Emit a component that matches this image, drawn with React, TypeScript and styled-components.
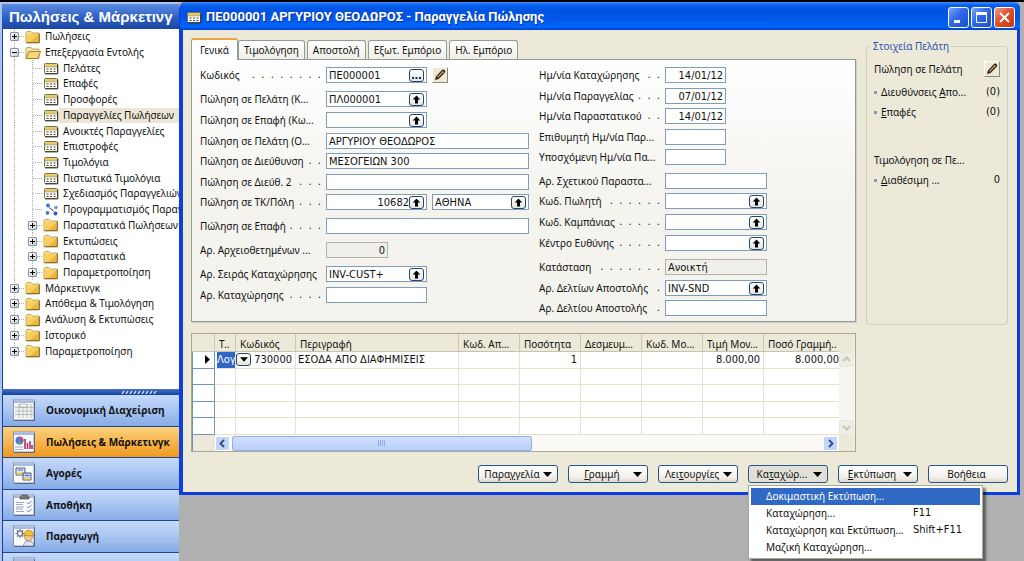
import React, { useId } from "react";
import styled, { createGlobalStyle, css } from "styled-components";

const valueFont = `11px/16px "DejaVu Sans Condensed", "Liberation Sans", sans-serif`;

const GlobalStyle = createGlobalStyle`
  *, *::before, *::after { box-sizing: border-box; }
  html, body { margin: 0; background: #b0b0b0; }
  body, button { font: 10px/16px "Noto Sans", "Open Sans", sans-serif; color: #111; }
  button { padding: 0; cursor: default; }
`;

const Desktop = styled.div`
  display: flex;
  align-items: flex-start;
  height: 100vh;
  overflow: hidden;
  border-top: 2px solid #000;
`;

/* ---------- navigation pane ---------- */

const Pane = styled.nav`
  flex: none;
  width: 179px;
  overflow: hidden;
  border-left: 2px solid #a9c5f5;
  border-top: 2px solid #a9c5f5;
  background: #fff;
  box-shadow: inset 1px 0 #1b3f96;
`;

const PaneTitle = styled.h1`
  margin: 0;
  padding-left: 7px;
  height: 25px;
  overflow: hidden;
  font: bold 15px/25px "Liberation Sans", sans-serif;
  white-space: nowrap;
  color: #fff;
  background: linear-gradient(#5b8be0, #2a5cc0 60%, #1c46a0);
`;

const Tree = styled.ul`
  display: grid;
  grid-auto-rows: 1fr;
  height: 330px;
  margin: 0 0 30px;
  padding: 0;
  list-style: none;
`;

const TreeItem = styled.li<{ $level: number }>`
  display: flex;
  align-items: center;
  padding-left: ${(p) => (p.$level ? 26 : 8)}px;
  background: ${(p) =>
    p.$level
      ? "repeating-linear-gradient(#aaa 0 1px, transparent 1px 2px) 12px 0 / 1px 100% no-repeat, repeating-linear-gradient(#aaa 0 1px, transparent 1px 2px) 30px 0 / 1px 100% no-repeat"
      : "repeating-linear-gradient(#aaa 0 1px, transparent 1px 2px) 12px 0 / 1px 100% no-repeat"};
`;

const Toggle = styled.button`
  flex: none;
  width: 9px;
  height: 9px;
  border: 1px solid #7b94b8;
  border-radius: 1px;
  background: linear-gradient(135deg, #fff, #d0ccc0);
  display: grid;
  place-items: center;
  svg { display: block; }
`;

const Twig = styled.span<{ $wide?: boolean }>`
  flex: none;
  width: ${(p) => (p.$wide ? 9 : 5)}px;
  margin-left: ${(p) => (p.$wide ? 5 : 0)}px;
  margin-right: 1px;
  border-top: 1px dotted #aaa;
`;

const TreeLink = styled.a<{ $active?: boolean }>`
  padding-left: 4px;
  height: 15px;
  line-height: 15px;
  white-space: nowrap;
  color: #111;
  text-decoration: none;
  background: ${(p) => (p.$active ? "#ece7d5" : "transparent")};
  flex: 1;
`;

const Splitter = styled.div`
  display: flex;
  justify-content: center;
  align-items: center;
  height: 6px;
  padding-left: 96px;
  background: linear-gradient(#4474c8, #17409a);
`;

const Areas = styled.div`
  display: grid;
  grid-auto-rows: 1fr;
  height: 189px;
  padding-left: 1px;
`;

const AreaButton = styled.button<{ $active?: boolean }>`
  display: flex;
  align-items: center;
  gap: 11px;
  overflow: hidden;
  padding-left: 10px;
  border: 0;
  border-bottom: 1px solid #1d459c;
  background: ${(p) =>
    p.$active ? "linear-gradient(#fbd27c, #f7b64c 50%, #ef9a1f)" : "linear-gradient(#c6dafa, #a8c5f2 50%, #86abe6)"};
  font: bold 10px/16px "Open Sans", sans-serif;
  white-space: nowrap;
  svg { flex: none; }
`;

/* ---------- window ---------- */

const Window = styled.main`
  flex: 1;
  min-width: 0;
  margin-right: 4px;
  border: solid #0c3fdc;
  border-width: 0 3px 3px 4px;
  border-radius: 7px 7px 0 0;
  background: #ece9d8;
`;

const TitleBar = styled.header`
  display: flex;
  align-items: center;
  gap: 2px;
  height: 28px;
  margin: 0 -3px;
  padding: 2px 5px 0 6px;
  border-radius: 6px 6px 0 0;
  background: linear-gradient(#3d8bff, #0660ee 12%, #0053e1 30%, #0057e8 60%, #0066ff 88%, #0040c4);
`;

const Title = styled.h2`
  flex: 1;
  margin: 0 0 0 2px;
  font: bold 13px/20px Roboto, sans-serif;
  color: #fff;
  text-shadow: 1px 1px #0a2f95;
  white-space: nowrap;
`;

const CaptionButton = styled.button<{ $close?: boolean }>`
  width: 21px;
  height: 21px;
  display: grid;
  place-items: center;
  border: 1px solid #fff;
  border-radius: 3px;
  background: ${(p) =>
    p.$close ? "linear-gradient(135deg, #f0a088, #e0502c 45%, #c43a14)" : "linear-gradient(135deg, #7ba6f7, #2f67e6 45%, #1c50cf)"};
`;

const Body = styled.div`
  padding: 8px 9px 9px 8px;
`;

const Upper = styled.div`
  display: flex;
  gap: 10px;
`;

const Left = styled.div`
  flex: 1;
  min-width: 0;
`;

const Tabs = styled.div`
  display: flex;
  align-items: flex-end;
  gap: 2px;
  height: 21px;
`;

const Tab = styled.button<{ $active?: boolean }>`
  height: 19px;
  padding: 0 5px;
  border: 1px solid #919b9c;
  border-bottom: 0;
  border-radius: 3px 3px 0 0;
  background: linear-gradient(#fff, #efeee6);
  white-space: nowrap;
  ${(p) =>
    p.$active &&
    css`
      height: 22px;
      margin: 0 -2px -1px 0;
      padding: 0 8px;
      border-top: 2px solid #eda63a;
      background: #fff;
      position: relative;
    `}
`;

const Panel = styled.section`
  display: flex;
  gap: 10px;
  padding: 7px 8px 16px;
  height: 263px;
  border: 1px solid #919b9c;
  box-shadow: 1px 1px #d0cec0;
  background: linear-gradient(#fff, #f4f3ee 55%);
`;

const Column = styled.div<{ $width: number }>`
  width: ${(p) => p.$width}px;
`;

const Row = styled.div<{ $before: number }>`
  display: flex;
  height: 16px;
  margin-top: ${(p) => p.$before}px;
`;

const Label = styled.label`
  flex: none;
  display: flex;
  width: 126px;
  padding-right: 5px;
  line-height: 17px;
  white-space: pre;
`;

const Leader = styled.span`
  flex: 1;
  font: ${valueFont};
  text-align: right;
`;

const Box = styled.span<{ $width?: number; $disabled?: boolean }>`
  display: flex;
  align-items: center;
  ${(p) => (p.$width ? `width: ${p.$width}px;` : "flex: 1;")}
  padding-right: 2px;
  border: 1px solid ${(p) => (p.$disabled ? "#b5b3a6" : "#7f9db9")};
  background: ${(p) => (p.$disabled ? "#f0efe9" : "#fff")};
  & + & { margin-left: 5px; }
`;

const Input = styled.input<{ $right?: boolean }>`
  flex: 1;
  min-width: 0;
  width: 0;
  height: 14px;
  padding: 1px 0 0 2px;
  border: 0;
  outline: 0;
  background: transparent;
  font: ${valueFont};
  color: #111;
  text-align: ${(p) => (p.$right ? "right" : "left")};
`;

const Lookup = styled.button`
  flex: none;
  width: 15px;
  height: 13px;
  display: grid;
  place-items: center;
  border: 1px solid #26466f;
  border-radius: 3px;
  background: linear-gradient(#fff, #e6e6e0);
`;

const EditButton = styled.button`
  flex: none;
  width: 16px;
  height: 16px;
  display: grid;
  place-items: center;
  border: 1px solid;
  border-color: #fff #8c8a7c #8c8a7c #fff;
  background: #ece9d8;
`;

const EditSlot = styled.span`
  margin-left: 5px;
`;

const Facts = styled.fieldset`
  flex: none;
  width: 142px;
  min-width: 0;
  height: 287px;
  margin: 0;
  margin-bottom: -3px;
  padding: 5px 7px;
  border: 1px solid #d0d0bf;
  border-radius: 4px;
  legend {
    margin-left: -3px;
    padding: 0 2px;
    color: #2c51b0;
  }
`;

const Fact = styled.div<{ $before?: number; $link?: boolean }>`
  display: flex;
  align-items: center;
  height: 20px;
  margin-top: ${(p) => p.$before ?? 0}px;
  white-space: nowrap;
  a { flex: 1; color: inherit; text-decoration: none; }
  & > span:first-child { flex: 1; }
  ${(p) =>
    p.$link &&
    css`
      &::before { content: ""; width: 3px; height: 3px; margin-right: 4px; background: #7f9db9; }
    `}
`;

const FactValue = styled.span`
  font: ${valueFont};
`;

/* ---------- lines ---------- */

const Lines = styled.div`
  display: grid;
  grid-template-columns: 1fr 16px;
  width: calc(100% - 152px);
  height: 119px;
  margin-top: 11px;
  border: 1px solid #a9a798;
  background: #ece9d8;
`;

const Table = styled.table`
  width: 100%;
  height: 101px;
  table-layout: fixed;
  border-collapse: separate;
  border-spacing: 0;
  background: #fff;
  th, td {
    height: 16px;
    padding: 0 3px 0 2px;
    overflow: hidden;
    white-space: nowrap;
    text-align: left;
    font-weight: normal;
    line-height: 15px;
    border-right: 1px solid #e4e2cd;
    border-bottom: 1px solid #e4e2cd;
  }
  td { font: ${valueFont}; line-height: 15px; }
  thead th {
    height: 18px;
    padding: 3px 0 0 4px;
    line-height: 14px;
    border-bottom-color: #c6c3b0;
    border-right-color: #c9c6b5;
    background: #ece9d8;
  }
  tbody th {
    border-right: 1px solid #6f93bb;
    border-bottom: 1px solid #6f93bb;
    border-left: 1px solid #6f93bb;
    text-align: right;
    padding-right: 4px;
  }
  th svg { display: block; margin-left: auto; }
  th:last-child, td:last-child { border-right: 0; padding-right: 0; }
`;

const Cell = styled.td<{ $right?: boolean; $selected?: boolean }>`
  && {
    text-align: ${(p) => (p.$right ? "right" : "left")};
    ${(p) => p.$selected && "background: #2f65c4; color: #fff; padding: 0; border-left: 2px solid #fff;"}
  }
`;

const CodeValue = styled.span`
  display: flex;
  align-items: center;
  justify-content: space-between;
  margin-left: -2px;
`;

const VScroll = styled.div`
  display: flex;
  flex-direction: column;
  justify-content: space-between;
  margin: 18px 0 16px;
  background: #f6f5ef;
`;

const HScroll = styled.div`
  display: flex;
  align-items: center;
  height: 16px;
  padding: 0 1px 0 22px;
  gap: 2px;
  border-left: 1px solid #6f93bb;
  background: linear-gradient(90deg, #ece9d8 22px, #fbfaf6 22px);
`;

const ScrollArrow = styled.button<{ $off?: boolean }>`
  flex: none;
  width: 15px;
  height: 15px;
  display: grid;
  place-items: center;
  border: 1px solid ${(p) => (p.$off ? "#e8e6da" : "#fff")};
  border-radius: 2px;
  background: ${(p) => (p.$off ? "#f0eee3" : "#c3d5fd")};
`;

const Track = styled.div`
  flex: 1;
  height: 15px;
`;

const Thumb = styled.div`
  display: grid;
  place-items: center;
  width: 51%;
  height: 15px;
  border: 1px solid #98b0e8;
  border-radius: 2px;
  background: linear-gradient(#d0dffe, #b9cffb);
`;

/* ---------- actions ---------- */

const Actions = styled.footer`
  display: flex;
  justify-content: flex-end;
  gap: 10px;
  margin-top: 13px;
`;

const MenuAnchor = styled.div`
  position: relative;
`;

const Action = styled.button<{ $open?: boolean; $center?: boolean }>`
  display: flex;
  align-items: center;
  justify-content: ${(p) => (p.$center ? "center" : "space-between")};
  width: 80px;
  height: 18px;
  padding: 0 5px 0 2px;
  border: 1px solid #26568c;
  border-radius: 3px;
  background: ${(p) => (p.$open ? "#e2e0d6" : "linear-gradient(#fff, #f1f0ea 70%, #dcd9cc)")};
  white-space: nowrap;
  span { flex: 1; text-align: center; }
`;

const Menu = styled.ul`
  position: absolute;
  top: 20px;
  left: 0;
  width: 235px;
  margin: 0;
  padding: 2px;
  border: 1px solid #aca899;
  background: #fff;
  box-shadow: 3px 3px 2px rgba(0, 0, 0, 0.45);
  list-style: none;
`;

const MenuItem = styled.button<{ $active?: boolean }>`
  display: grid;
  grid-template-columns: 147px 1fr;
  width: 100%;
  height: 17px;
  padding-left: 15px;
  border: 0;
  text-align: left;
  white-space: nowrap;
  background: ${(p) => (p.$active ? "#316ac5" : "transparent")};
  color: ${(p) => (p.$active ? "#fff" : "#111")};
`;

const Shortcut = styled.span`
  font: ${valueFont};
`;

/* ---------- drawings ---------- */

const UpArrow = () => (
  <svg width="9" height="9" viewBox="0 0 9 9"><path d="M4.5 0.5 8.3 4.5H6V8.5H3V4.5H0.7Z" fill="#000" /></svg>
);
const Dots = () => (
  <svg width="9" height="9" viewBox="0 0 9 9"><path d="M0 6h2v2H0zM3.500 6h2v2h-2zM7 6h2v2H7z" fill="#14325c" /></svg>
);
const DownArrow = ({ size = 9 }: { size?: number }) => (
  <svg width={size} height="5" viewBox="0 0 9 5"><path d="M0 0h9L4.500 5z" fill="#000" /></svg>
);
const Pencil = () => (
  <svg width="12" height="12" viewBox="0 0 12 12">
    <path d="M1 11 2 7.500 7.500 1.500Q9-.3 10.600 1.200 12 2.600 10.500 4L4.500 10Z" fill="#2b1a10" />
    <path d="M3.500 8.500 8.700 3" stroke="#d09a50" strokeWidth="1.400" />
    <path d="M8 1.800l2 2" stroke="#fff" strokeWidth=".7" />
  </svg>
);
const Chevron = ({ turn, color }: { turn: number; color: string }) => (
  <svg width="9" height="9" viewBox="0 0 9 9">
    <path d="M6 1 2.500 4.500 6 8" fill="none" stroke={color} strokeWidth="2" transform={`rotate(${turn} 4.500 4.500)`} />
  </svg>
);
const Sign = ({ open }: { open?: boolean }) => (
  <svg width="7" height="7" viewBox="0 0 7 7"><path d={open ? "M1 3h5v1H1z" : "M1 3h5v1H1zM3 1h1v5H3z"} fill="#000" /></svg>
);
const Folder = ({ open }: { open?: boolean }) => (
  <svg width="16" height="14" viewBox="0 0 16 14">
    <path d="M1 12.500V2.500L2 1.500H6L7.500 3H14V12.500Z" fill={open ? "#f7e3a0" : "#fbe08a"} stroke="#b8923a" strokeWidth=".8" />
    {open ? (
      <path d="M1 12.500 4 5.500H15.600L12.800 12.500Z" fill="#fbd679" stroke="#9a701a" strokeWidth=".8" />
    ) : (
      <>
        <path d="M1.500 4H13.500V12H1.500Z" fill="#f8d060" />
        <path d="M5 12 13.500 4.500V12Z" fill="#eeb43c" />
        <path d="M14.300 3.500V12.800H1.500" fill="none" stroke="#6e5112" strokeWidth=".9" />
      </>
    )}
  </svg>
);
const Sheet = () => (
  <svg width="16" height="13" viewBox="0 0 16 13">
    <rect x="1.500" y="1.500" width="13" height="10" rx="1" fill="#fffdf0" stroke="#77705a" />
    <path d="M2 2H14V4.500H2Z" fill="#eccb5e" />
    <path d="M2 4.800H14" stroke="#77705a" strokeWidth=".6" />
    <path d="M3.500 7h2M7 7h2M10.500 7h2M3.500 9.500h2M7 9.500h2M10.500 9.500h2" stroke="#444" strokeWidth="1.200" />
    <path d="M14.800 2.500V11.900H2" stroke="#222" strokeWidth=".9" fill="none" />
  </svg>
);
const Nodes = () => (
  <svg width="16" height="13" viewBox="0 0 16 13">
    <path d="M6 4.500 11 8.500" stroke="#444" fill="none" />
    <circle cx="5" cy="2.500" r="1.900" fill="#3f6fe0" /><circle cx="4.500" cy="9.800" r="1.900" fill="#3f6fe0" />
    <circle cx="13" cy="4.500" r="1.800" fill="#6b95ef" /><circle cx="12.500" cy="10.500" r="1.900" fill="#2a56c6" />
  </svg>
);
const Grip = () => (
  <svg width="36" height="4" viewBox="0 0 36 4">
    <path d="M1 4l2-3M5 4l2-3M9 4l2-3M13 4l2-3M17 4l2-3M21 4l2-3M25 4l2-3M29 4l2-3M33 4l2-3" stroke="#e6eefc" strokeWidth="1.300" />
  </svg>
);

const areaArt: Record<string, React.ReactNode> = {
  ledger: (
    <>
      <path d="M2 5H20V19H2Z" fill="#f4f4e6" />
      <path d="M2 8.500H20M2 12H20M2 15.500H20M6 5V19M10 5V19M14 5V19M18 5V19" stroke="#a9b3c0" strokeWidth=".8" />
      <path d="M7 5h7v3H7z" fill="#fff" stroke="#8f98a8" strokeWidth=".6" />
    </>
  ),
  sales: (
    <>
      <circle cx="6.500" cy="9.500" r="4" fill="#4a7ae0" />
      <path d="M6.500 9.500V5.500A4 4 0 0 1 10.300 10.500Z" fill="#d14b7c" /><path d="M6.500 9.500 9 13A4 4 0 0 1 4 12.500Z" fill="#50b06a" />
      <path d="M12 18V8M14.500 18V12M17 18V10M19 18V14" stroke="#b02e5e" strokeWidth="1.600" />
      <path d="M2 16h8M2 18.500h8" stroke="#8f98b8" strokeWidth=".8" />
    </>
  ),
  buying: (
    <>
      <path d="M3 6h9v7H3z" fill="#dce9fc" stroke="#334" strokeWidth=".8" /><path d="M3.500 10.500h8v2h-8z" fill="#f0d23c" />
      <path d="M10 11h8v7h-8z" fill="#bcd4fb" stroke="#334" strokeWidth=".8" /><path d="M10.500 16h7v1.600h-7z" fill="#f0d23c" />
      <path d="M5 8h5M12 13.500h4" stroke="#3b69cc" />
    </>
  ),
  stock: (
    <>
      <path d="M7 3 9 1h5l2 2v2H7z" fill="#77757a" stroke="#444" strokeWidth=".6" />
      <path d="M3 8.500h8M3 10.500h7M3 13h8M3 15h7M3 17.500h8" stroke="#8a90b0" strokeWidth=".8" />
      <path d="M14 8.500l1.500 1.500 3-3M14 12.500l1.500 1.500 3-3M14 16.500l1.500 1.500 3-3" fill="none" stroke="#3f6bc0" strokeWidth=".9" />
    </>
  ),
  production: (
    <>
      <circle cx="7" cy="8.500" r="2.600" fill="none" stroke="#6b7488" strokeWidth="1.300" />
      <path d="M7 4v1.500M7 11.500v1.500M2.500 8.500h1.500M10 8.500h1.500M3.900 5.400l1 1M9.100 10.600l1 1M3.900 11.600l1-1M9.100 6.400l1-1" stroke="#6b7488" strokeWidth="1.200" />
      <circle cx="15.500" cy="12" r="4" fill="#f3c79c" stroke="#8a5c30" strokeWidth=".5" />
      <path d="M10.800 10.500Q11.500 5 16 5.200 20.500 5.500 20.500 11Z" fill="#f2c12e" stroke="#8f6c10" strokeWidth=".6" />
      <path d="M10.500 21Q11 16 15.500 16T21 21Z" fill="#dfe6f4" stroke="#5e6f90" strokeWidth=".7" />
    </>
  ),
};

const AreaIcon = ({ kind }: { kind: string }) => (
  <svg width="22" height="22" viewBox="0 0 22 22">
    <rect x=".5" y="1" width="20.500" height="20" fill="#fbfbfd" stroke="#8796b4" />
    <rect x="1" y="1.500" width="19.500" height="2.500" fill="#a9bbdf" />
    {areaArt[kind] ?? areaArt.ledger}
    <path d="M21.500 2V21.500H1" stroke="#5a6a8c" fill="none" />
  </svg>
);

/* ---------- data ---------- */

type Node = { text: string; level: 0 | 1; kind: "folder" | "open" | "sheet" | "nodes"; active?: boolean };
const tree: Node[] = [
  { text: "Πωλήσεις", level: 0, kind: "folder" },
  { text: "Επεξεργασία Εντολής", level: 0, kind: "open" },
  { text: "Πελάτες", level: 1, kind: "sheet" },
  { text: "Επαφές", level: 1, kind: "sheet" },
  { text: "Προσφορές", level: 1, kind: "sheet" },
  { text: "Παραγγελίες Πωλήσεων", level: 1, kind: "sheet", active: true },
  { text: "Ανοικτές Παραγγελίες", level: 1, kind: "sheet" },
  { text: "Επιστροφές", level: 1, kind: "sheet" },
  { text: "Τιμολόγια", level: 1, kind: "sheet" },
  { text: "Πιστωτικά Τιμολόγια", level: 1, kind: "sheet" },
  { text: "Σχεδιασμός Παραγγελιών", level: 1, kind: "sheet" },
  { text: "Προγραμματισμός Παραγ", level: 1, kind: "nodes" },
  { text: "Παραστατικά Πωλήσεων", level: 1, kind: "folder" },
  { text: "Εκτυπώσεις", level: 1, kind: "folder" },
  { text: "Παραστατικά", level: 1, kind: "folder" },
  { text: "Παραμετροποίηση", level: 1, kind: "folder" },
  { text: "Μάρκετινγκ", level: 0, kind: "folder" },
  { text: "Απόθεμα & Τιμολόγηση", level: 0, kind: "folder" },
  { text: "Ανάλυση & Εκτυπώσεις", level: 0, kind: "folder" },
  { text: "Ιστορικό", level: 0, kind: "folder" },
  { text: "Παραμετροποίηση", level: 0, kind: "folder" },
];

const areas = [
  { text: "Οικονομική Διαχείριση", kind: "ledger" },
  { text: "Πωλήσεις & Μάρκετινγκ", kind: "sales", active: true },
  { text: "Αγορές", kind: "buying" },
  { text: "Αποθήκη", kind: "stock" },
  { text: "Παραγωγή", kind: "production" },
  { text: "", kind: "jobs" },
];

type Part = { value?: string; width?: number; right?: boolean; lookup?: "up" | "dots"; disabled?: boolean };
type FieldData = { label: string; dots?: number; before: number; parts: Part[]; edit?: boolean };

const leftFields: FieldData[] = [
  { label: "Κωδικός", dots: 8, before: 0, parts: [{ value: "ΠΕ000001", width: 101, lookup: "dots" }], edit: true },
  { label: "Πώληση σε Πελάτη (Κ...", before: 8, parts: [{ value: "ΠΛ000001", width: 101, lookup: "up" }] },
  { label: "Πώληση σε Επαφή (Κω...", before: 5, parts: [{ width: 101, lookup: "up" }] },
  { label: "Πώληση σε Πελάτη (Ο...", before: 5, parts: [{ value: "ΑΡΓΥΡΙΟΥ ΘΕΟΔΩΡΟΣ" }] },
  { label: "Πώληση σε Διεύθυνση", dots: 2, before: 4, parts: [{ value: "ΜΕΣΟΓΕΙΩΝ 300" }] },
  { label: "Πώληση σε Διεύθ. 2", dots: 3, before: 5, parts: [{}] },
  {
    label: "Πώληση σε ΤΚ/Πόλη", dots: 3, before: 4,
    parts: [{ value: "10682", width: 101, right: true, lookup: "up" }, { value: "ΑΘΗΝΑ", lookup: "up" }],
  },
  { label: "Πώληση σε Επαφή", dots: 4, before: 8, parts: [{}] },
  { label: "Αρ. Αρχειοθετημένων ...", before: 8, parts: [{ value: "0", width: 62, right: true, disabled: true }] },
  { label: "Αρ. Σειράς Καταχώρησης", before: 8, parts: [{ value: "INV-CUST+", width: 101, lookup: "up" }] },
  { label: "Αρ. Καταχώρησης", dots: 4, before: 5, parts: [{ width: 101 }] },
];

const rightFields: FieldData[] = [
  { label: "Ημ/νία Καταχώρησης", dots: 2, before: 0, parts: [{ value: "14/01/12", width: 61, right: true }] },
  { label: "Ημ/νία Παραγγελίας", dots: 3, before: 5, parts: [{ value: "07/01/12", width: 61, right: true }] },
  { label: "Ημ/νία Παραστατικού", dots: 2, before: 4, parts: [{ value: "14/01/12", width: 61, right: true }] },
  { label: "Επιθυμητή Ημ/νία Παρ...", before: 5, parts: [{ width: 61 }] },
  { label: "Υποσχόμενη Ημ/νία Πα...", before: 4, parts: [{ width: 61 }] },
  { label: "Αρ. Σχετικού Παραστα...", before: 8, parts: [{}] },
  { label: "Κωδ. Πωλητή", dots: 6, before: 4, parts: [{ lookup: "up" }] },
  { label: "Κωδ. Καμπάνιας", dots: 5, before: 5, parts: [{ lookup: "up" }] },
  { label: "Κέντρο Ευθύνης", dots: 5, before: 5, parts: [{ lookup: "up" }] },
  { label: "Κατάσταση", dots: 7, before: 8, parts: [{ value: "Ανοικτή", disabled: true }] },
  { label: "Αρ. Δελτίων Αποστολής", dots: 1, before: 5, parts: [{ value: "INV-SND", lookup: "up" }] },
  { label: "Αρ. Δελτίου Αποστολής", dots: 1, before: 4, parts: [{}] },
];

const columns = [
  { title: "", width: 23 }, { title: "Τ..", width: 21 }, { title: "Κωδικός", width: 60 },
  { title: "Περιγραφή", width: 163 }, { title: "Κωδ. Απ...", width: 61 }, { title: "Ποσότητα", width: 61 },
  { title: "Δεσμευμ...", width: 61 }, { title: "Κωδ. Μο...", width: 61 }, { title: "Τιμή Μον...", width: 61 },
  { title: "Ποσό Γραμμή..", width: 0 },
];

/* ---------- components ---------- */

function Field({ label, dots = 0, before, parts, edit }: FieldData) {
  const id = useId();
  return (
    <Row $before={before}>
      <Label htmlFor={id}>
        {label}
        {dots > 0 && <Leader aria-hidden>{Array(dots).fill(".").join("  ")}</Leader>}
      </Label>
      {parts.map((p, i) => (
        <Box key={i} $width={p.width} $disabled={p.disabled}>
          <Input
            id={i ? undefined : id}
            aria-label={i ? label : undefined}
            defaultValue={p.value}
            readOnly={p.disabled}
            $right={p.right}
          />
          {p.lookup && <Lookup type="button" aria-label="Αναζήτηση">{p.lookup === "up" ? <UpArrow /> : <Dots />}</Lookup>}
        </Box>
      ))}
      {edit && <EditSlot><EditButton type="button" aria-label="Επεξεργασία"><Pencil /></EditButton></EditSlot>}
    </Row>
  );
}

function TreeRow({ text, level, kind, active }: Node) {
  const branch = kind === "folder" || kind === "open";
  return (
    <TreeItem $level={level}>
      {branch && <Toggle type="button" aria-label={text}><Sign open={kind === "open"} /></Toggle>}
      <Twig $wide={!branch} />
      {branch ? <Folder open={kind === "open"} /> : kind === "nodes" ? <Nodes /> : <Sheet />}
      <TreeLink href="#" $active={active}>{text}</TreeLink>
    </TreeItem>
  );
}

export default function App() {
  return (
    <>
      <GlobalStyle />
      <Desktop>
        <Pane>
          <PaneTitle>Πωλήσεις &amp; Μάρκετινγ</PaneTitle>
          <Tree>{tree.map((n, i) => <TreeRow key={i} {...n} />)}</Tree>
          <Splitter><Grip /></Splitter>
          <Areas>
            {areas.map((a) => (
              <AreaButton key={a.kind} type="button" $active={a.active}>
                <AreaIcon kind={a.kind} />
                {a.text}
              </AreaButton>
            ))}
          </Areas>
        </Pane>

        <Window>
          <TitleBar>
            <Sheet />
            <Title>ΠΕ000001 ΑΡΓΥΡΙΟΥ ΘΕΟΔΩΡΟΣ - Παραγγελία Πώλησης</Title>
            <CaptionButton type="button" aria-label="Ελαχιστοποίηση">
              <svg width="13" height="13"><path d="M2 9h6v3H2z" fill="#fff" /></svg>
            </CaptionButton>
            <CaptionButton type="button" aria-label="Μεγιστοποίηση">
              <svg width="13" height="13"><path d="M1.500 2.500h10v9h-10z" fill="none" stroke="#fff" /><path d="M1 1h11v3H1z" fill="#fff" /></svg>
            </CaptionButton>
            <CaptionButton type="button" aria-label="Κλείσιμο" $close>
              <svg width="13" height="13"><path d="M2 2l9 9M11 2l-9 9" stroke="#fff" strokeWidth="2" /></svg>
            </CaptionButton>
          </TitleBar>

          <Body>
            <Upper>
              <Left>
                <Tabs>
                  {["Γενικά", "Τιμολόγηση", "Αποστολή", "Εξωτ. Εμπόριο", "Ηλ. Εμπόριο"].map((t, i) => (
                    <Tab key={t} type="button" $active={i === 0}>{t}</Tab>
                  ))}
                </Tabs>
                <Panel>
                  <Column $width={329}>{leftFields.map((f) => <Field key={f.label} {...f} />)}</Column>
                  <Column $width={228}>{rightFields.map((f) => <Field key={f.label} {...f} />)}</Column>
                </Panel>
              </Left>

              <Facts>
                <legend>Στοιχεία Πελάτη</legend>
                <Fact>
                  <span>Πώληση σε Πελάτη</span>
                  <EditButton type="button" aria-label="Επεξεργασία πελάτη"><Pencil /></EditButton>
                </Fact>
                <Fact $link $before={3}><a href="#">Διευθύνσεις <u>Α</u>πο...</a><FactValue>(0)</FactValue></Fact>
                <Fact $link><a href="#"><u>Ε</u>παφές</a><FactValue>(0)</FactValue></Fact>
                <Fact $before={28}><span>Τιμολόγηση σε Πε...</span></Fact>
                <Fact $link><a href="#"><u>Δ</u>ιαθέσιμη ...</a><FactValue>0</FactValue></Fact>
              </Facts>
            </Upper>

            <Lines>
              <div>
                <Table>
                  <colgroup>
                    {columns.map((c, i) => <col key={i} width={c.width || undefined} />)}
                  </colgroup>
                  <thead>
                    <tr>{columns.map((c, i) => <th key={i}>{c.title}</th>)}</tr>
                  </thead>
                  <tbody>
                    <tr>
                      <th scope="row"><svg width="5" height="9"><path d="M0 0 5 4.500 0 9z" /></svg></th>
                      <Cell $selected>Λογ</Cell>
                      <Cell>
                        <CodeValue>
                          <Lookup type="button" aria-label="Επιλογή τύπου"><DownArrow size={8} /></Lookup>
                          730000
                        </CodeValue>
                      </Cell>
                      <Cell>ΕΣΟΔΑ ΑΠΟ ΔΙΑΦΗΜΙΣΕΙΣ</Cell>
                      <Cell />
                      <Cell $right>1</Cell>
                      <Cell />
                      <Cell />
                      <Cell $right>8.000,00</Cell>
                      <Cell $right>8.000,00</Cell>
                    </tr>
                    {[1, 2, 3, 4].map((r) => (
                      <tr key={r}>
                        <th scope="row" />
                        {columns.slice(1).map((_, i) => <Cell key={i} />)}
                      </tr>
                    ))}
                  </tbody>
                </Table>
                <HScroll>
                  <ScrollArrow type="button" aria-label="Αριστερά"><Chevron turn={0} color="#34508c" /></ScrollArrow>
                  <Track>
                    <Thumb><svg width="8" height="6"><path d="M.5 0v6M2.500 0v6M4.500 0v6M6.500 0v6" stroke="#8fabec" /></svg></Thumb>
                  </Track>
                  <ScrollArrow type="button" aria-label="Δεξιά"><Chevron turn={180} color="#34508c" /></ScrollArrow>
                </HScroll>
              </div>
              <VScroll>
                <ScrollArrow type="button" aria-label="Πάνω" $off><Chevron turn={90} color="#c9c7ba" /></ScrollArrow>
                <ScrollArrow type="button" aria-label="Κάτω" $off><Chevron turn={270} color="#c9c7ba" /></ScrollArrow>
              </VScroll>
            </Lines>

            <Actions>
              <Action type="button"><span>Παρα<u>γ</u>γελία</span><DownArrow /></Action>
              <Action type="button"><span><u>Γ</u>ραμμή</span><DownArrow /></Action>
              <Action type="button"><span>Λει<u>τ</u>ουργίες</span><DownArrow /></Action>
              <MenuAnchor>
                <Action type="button" $open aria-haspopup="menu"><span>Κα<u>τ</u>αχώρ...</span><DownArrow /></Action>
                <Menu>
                  <li><MenuItem type="button" $active>Δοκιμαστική Εκτύπωση...</MenuItem></li>
                  <li><MenuItem type="button"><span>Καταχώρηση...</span><Shortcut>F11</Shortcut></MenuItem></li>
                  <li><MenuItem type="button"><span>Καταχώρηση και Εκτύπωση...</span><Shortcut>Shift+F11</Shortcut></MenuItem></li>
                  <li><MenuItem type="button">Μαζική Καταχώρηση...</MenuItem></li>
                </Menu>
              </MenuAnchor>
              <Action type="button"><span><u>Ε</u>κτύπωση</span><DownArrow /></Action>
              <Action type="button" $center>Βοήθεια</Action>
            </Actions>
          </Body>
        </Window>
      </Desktop>
    </>
  );
}
